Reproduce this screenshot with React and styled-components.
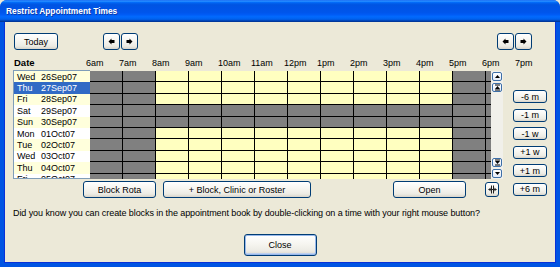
import React from 'react';
import styled, { createGlobalStyle, css } from 'styled-components';

const GlobalStyle = createGlobalStyle`
  html, body {
    margin: 0;
    padding: 0;
    background: #ece9d8;
  }
  body {
    font-family: "Liberation Sans", Arial, sans-serif;
    font-size: 9px;
    color: #000;
  }
`;

const DAYS = [
  ['Wed', '26Sep07'],
  ['Thu', '27Sep07'],
  ['Fri', '28Sep07'],
  ['Sat', '29Sep07'],
  ['Sun', '30Sep07'],
  ['Mon', '01Oct07'],
  ['Tue', '02Oct07'],
  ['Wed', '03Oct07'],
  ['Thu', '04Oct07'],
  ['Fri', '05Oct07'],
];

const HOURS = ['6am', '7am', '8am', '9am', '10am', '11am', '12pm', '1pm', '2pm', '3pm', '4pm', '5pm', '6pm', '7pm'];

const CLOSED_COLS = [0, 1, 11, 12];
const CLOSED_ROWS = [3, 4];

const SHIFTS = ['-6 m', '-1 m', '-1 w', '+1 w', '+1 m', '+6 m'];

const ROW_H = '11.4px';

const Window = styled.div`
  width: 560px;
  height: 267px;
  display: flex;
  flex-direction: column;
  background: #0054e3;
  border-radius: 7px 7px 0 0;
  overflow: hidden;
  box-sizing: border-box;
`;

const TitleBar = styled.div`
  height: 22px;
  flex: none;
  display: flex;
  align-items: center;
  padding-left: 6px;
  background: linear-gradient(
    to bottom,
    #0058ee 0%, #3a93ff 4%, #288eff 6%, #127dff 8%, #036ffc 10%,
    #0262ee 14%, #0057e5 20%, #0054e3 24%, #0055eb 56%, #005bf5 66%,
    #026afe 76%, #0062ef 86%, #0052d6 92%, #0040ab 94%, #003092 100%
  );
  color: #fff;
  font-weight: bold;
  font-size: 8.4px;
  text-shadow: 1px 1px #0a3aa8;
`;

const Body = styled.div`
  flex: 1;
  margin: 0 4px 4px 4px;
  background: #ece9d8;
  padding: 11px 8px 0 8px;
  display: flex;
  flex-direction: column;
  border-left: 1px solid #0831d9;
  border-right: 1px solid #0831d9;
  border-bottom: 1px solid #0831d9;
`;

const xpButton = css`
  box-sizing: border-box;
  border: 1px solid #003c74;
  border-radius: 3px;
  background: linear-gradient(to bottom, #ffffff 0%, #f6f5f0 45%, #ecebe4 80%, #d8d4ca 100%);
  font-family: "Liberation Sans", Arial, sans-serif;
  font-size: 9px;
  color: #000;
  padding: 0;
  display: flex;
  align-items: center;
  justify-content: center;
`;

const Button = styled.button`
  ${xpButton};
  width: ${(p) => p.$w}px;
  height: ${(p) => p.$h || 17}px;
  margin-left: ${(p) => p.$ml || 0}px;
  ${(p) => p.$default && css`
    box-shadow: inset 0 0 0 1px #98b8ea, inset 0 -1px 0 1px #bcd0f0;
  `}
`;

const Toolbar = styled.div`
  display: flex;
  align-items: center;
  height: 17px;
`;

const ArrowPair = styled.div`
  display: flex;
  gap: 1px;
  margin-left: ${(p) => p.$ml || 0}px;
  margin-right: ${(p) => p.$mr || 0}px;
`;

const ArrowButton = styled.button`
  ${xpButton};
  width: 17px;
  height: 17px;
`;

const Spacer = styled.div`
  flex: 1;
`;

const HeaderRow = styled.div`
  display: flex;
  align-items: center;
  height: 15px;
  margin-top: 5px;
`;

const DateHeader = styled.div`
  width: 77px;
  padding-left: 1px;
  box-sizing: border-box;
  font-weight: bold;
  font-size: 9.5px;
`;

const HourLabel = styled.div`
  width: 33px;
  flex: none;
  padding-left: 1px;
  box-sizing: border-box;
  white-space: nowrap;
`;

const Middle = styled.div`
  display: flex;
  gap: 10px;
`;

const LeftCol = styled.div`
  width: 490px;
  display: flex;
  flex-direction: column;
`;

const Planner = styled.div`
  display: flex;
  height: 109px;
`;

const DateList = styled.div`
  width: 77px;
  box-sizing: border-box;
  border: 1px solid #7f9db9;
  border-right: none;
  background: #fff;
  overflow: hidden;
`;

const DateRow = styled.div`
  height: ${ROW_H};
  display: flex;
  align-items: center;
  padding-left: 3px;
  white-space: nowrap;
  background: ${(p) => (p.$selected ? '#316ac5' : p.$even ? '#ffffdc' : '#ffffff')};
  color: ${(p) => (p.$selected ? '#fff' : '#000')};
`;

const DayName = styled.span`
  width: 24px;
`;

const Grid = styled.div`
  width: 401px;
  height: 108px;
  margin-top: 1px;
  display: grid;
  grid-template-columns: repeat(13, 33px);
  grid-auto-rows: ${ROW_H};
  align-content: start;
  overflow: hidden;
`;

const Cell = styled.div`
  box-sizing: border-box;
  border-right: 1px solid #000;
  border-bottom: 1px solid #000;
  background: ${(p) => (p.$closed ? '#808080' : '#ffffc0')};
`;

const ScrollBar = styled.div`
  width: 12px;
  height: 108px;
  margin-top: 1px;
  background: #f1f0ea;
  display: flex;
  flex-direction: column;
  align-items: center;
  padding: 1px 0;
  box-sizing: border-box;
  gap: 2px;
`;

const ScrollButton = styled.div`
  width: 10px;
  height: 9px;
  box-sizing: border-box;
  border: 1px solid #3c6ea8;
  border-radius: 2px;
  background: linear-gradient(to bottom, #ffffff, #e4ebf7);
  display: flex;
  align-items: center;
  justify-content: center;
`;

const ButtonRow = styled.div`
  display: flex;
  align-items: center;
  height: 17px;
  margin-top: 2px;
`;

const SideCol = styled.div`
  width: 34px;
  padding-top: 20px;
  display: flex;
  flex-direction: column;
  gap: 5.5px;
`;

const Tip = styled.div`
  margin-top: 10px;
  line-height: 11px;
  white-space: nowrap;
  letter-spacing: -0.08px;
`;

const Footer = styled.div`
  display: flex;
  justify-content: center;
  margin-top: 15px;
`;

function Arrow({ dir }) {
  const d = dir === 'left'
    ? 'M0.5 3.5 L3.5 0.5 L3.5 2 L6.5 2 L6.5 5 L3.5 5 L3.5 6.5 Z'
    : 'M6.5 3.5 L3.5 0.5 L3.5 2 L0.5 2 L0.5 5 L3.5 5 L3.5 6.5 Z';
  return (
    <svg width="7" height="7" viewBox="0 0 7 7">
      <path d={d} fill="#000" />
    </svg>
  );
}

function ScrollGlyph({ kind }) {
  const shapes = {
    up: <path d="M1 5 L3.5 2 L6 5 Z" fill="#000" />,
    down: <path d="M1 2 L3.5 5 L6 2 Z" fill="#000" />,
    top: (
      <>
        <rect x="1" y="0.5" width="5" height="1" fill="#000" />
        <path d="M1 5 L3.5 2 L6 5 Z" fill="#000" />
        <rect x="1" y="5.5" width="5" height="1" fill="#000" />
      </>
    ),
    bottom: (
      <>
        <rect x="1" y="0.5" width="5" height="1" fill="#000" />
        <path d="M1 2 L3.5 5 L6 2 Z" fill="#000" />
        <rect x="1" y="5.5" width="5" height="1" fill="#000" />
      </>
    ),
  };
  return (
    <svg width="7" height="7" viewBox="0 0 7 7">
      {shapes[kind]}
    </svg>
  );
}

function WidthGlyph() {
  return (
    <svg width="9" height="9" viewBox="0 0 9 9">
      <rect x="3" y="0.5" width="1" height="8" fill="#222" />
      <rect x="5" y="0.5" width="1" height="8" fill="#222" />
      <rect x="0.5" y="4" width="8" height="1" fill="#222" />
      <path d="M0.5 4.5 L2.5 2.5 L2.5 6.5 Z" fill="#222" />
      <path d="M8.5 4.5 L6.5 2.5 L6.5 6.5 Z" fill="#222" />
    </svg>
  );
}

export default function App() {
  return (
    <>
      <GlobalStyle />
      <Window>
        <TitleBar>Restrict Appointment Times</TitleBar>
        <Body>
          <Toolbar>
            <Button $w={44} $ml={1}>Today</Button>
            <ArrowPair $ml={45}>
              <ArrowButton><Arrow dir="left" /></ArrowButton>
              <ArrowButton><Arrow dir="right" /></ArrowButton>
            </ArrowPair>
            <Spacer />
            <ArrowPair $mr={15}>
              <ArrowButton><Arrow dir="left" /></ArrowButton>
              <ArrowButton><Arrow dir="right" /></ArrowButton>
            </ArrowPair>
          </Toolbar>

          <HeaderRow>
            <DateHeader>Date</DateHeader>
            {HOURS.map((h) => (
              <HourLabel key={h}>{h}</HourLabel>
            ))}
          </HeaderRow>

          <Middle>
            <LeftCol>
              <Planner>
                <DateList>
                  {DAYS.map(([day, date], i) => (
                    <DateRow key={date} $even={i % 2 === 0} $selected={i === 1}>
                      <DayName>{day}</DayName>
                      <span>{date}</span>
                    </DateRow>
                  ))}
                </DateList>
                <Grid>
                  {DAYS.map(([, date], r) =>
                    HOURS.slice(0, 13).map((h, c) => (
                      <Cell
                        key={`${date}-${h}`}
                        $closed={CLOSED_ROWS.includes(r) || CLOSED_COLS.includes(c)}
                      />
                    ))
                  )}
                </Grid>
                <ScrollBar>
                  <ScrollButton><ScrollGlyph kind="up" /></ScrollButton>
                  <ScrollButton><ScrollGlyph kind="top" /></ScrollButton>
                  <Spacer />
                  <ScrollButton><ScrollGlyph kind="bottom" /></ScrollButton>
                  <ScrollButton><ScrollGlyph kind="down" /></ScrollButton>
                </ScrollBar>
              </Planner>

              <ButtonRow>
                <Button $w={73} $ml={70}>Block Rota</Button>
                <Button $w={148} $ml={7}>+ Block, Clinic or Roster</Button>
                <Button $w={73} $ml={82}>Open</Button>
                <Button $w={14} $h={15} $ml={19}><WidthGlyph /></Button>
              </ButtonRow>
            </LeftCol>

            <SideCol>
              {SHIFTS.map((s) => (
                <Button key={s} $w={34} $h={13}>{s}</Button>
              ))}
            </SideCol>
          </Middle>

          <Tip>
            Did you know you can create blocks in the appointment book by double-clicking on a time with your right mouse button?
          </Tip>

          <Footer>
            <Button $w={73} $h={22} $default>Close</Button>
          </Footer>
        </Body>
      </Window>
    </>
  );
}
